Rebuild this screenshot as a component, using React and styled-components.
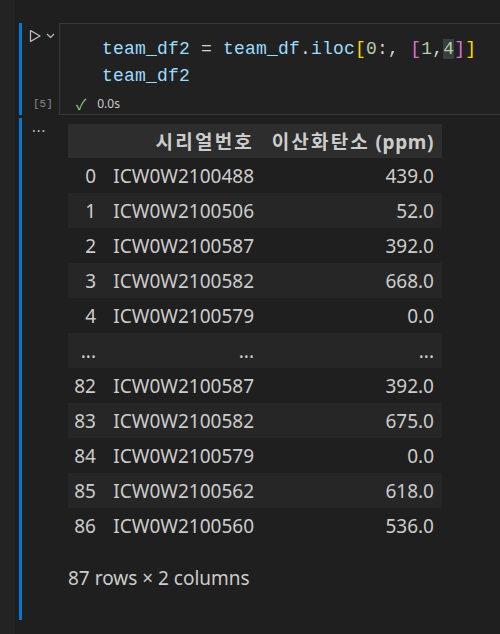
import React from "react";
import styled, { createGlobalStyle } from "styled-components";

const GlobalStyle = createGlobalStyle`
  html, body {
    margin: 0;
    padding: 0;
    background: #1f1f1f;
  }
  body {
    font-family: "Noto Sans", "Noto Sans CJK KR", sans-serif;
  }
`;

const rows = [
  ["0", "ICW0W2100488", "439.0"],
  ["1", "ICW0W2100506", "52.0"],
  ["2", "ICW0W2100587", "392.0"],
  ["3", "ICW0W2100582", "668.0"],
  ["4", "ICW0W2100579", "0.0"],
  ["...", "...", "..."],
  ["82", "ICW0W2100587", "392.0"],
  ["83", "ICW0W2100582", "675.0"],
  ["84", "ICW0W2100579", "0.0"],
  ["85", "ICW0W2100562", "618.0"],
  ["86", "ICW0W2100560", "536.0"],
];

const App = () => {
  return (
    <>
      <GlobalStyle />
      <Page>
        <Gutter />
        <Notebook>
          <Cell>
            <Bar />
            <Side>
              <RunRow>
                <svg width="14" height="14" viewBox="0 0 14 14">
                  <path
                    d="M2.5 1.5 L12 7 L2.5 12.5 Z"
                    fill="none"
                    stroke="#c5c5c5"
                    strokeWidth="1.2"
                    strokeLinejoin="round"
                  />
                </svg>
                <svg width="9" height="6" viewBox="0 0 9 6">
                  <path d="M1 1 L4.5 4.5 L8 1" fill="none" stroke="#c5c5c5" strokeWidth="1.1" />
                </svg>
              </RunRow>
              <ExecCount>[5]</ExecCount>
            </Side>
            <Editor>
              <Code>
                <Line>
                  <V>team_df2</V> = <V>team_df</V>.<V>iloc</V>
                  <Br $c="#ffd700">[</Br>
                  <N>0</N>:, <Br $c="#da70d6">[</Br>
                  <N>1</N>,<Hl>4</Hl>
                  <Br $c="#da70d6">]</Br>
                  <Br $c="#ffd700">]</Br>
                </Line>
                <Line>
                  <V>team_df2</V>
                </Line>
              </Code>
              <Status>
                <Check>✓</Check>
                <span>0.0s</span>
              </Status>
            </Editor>
          </Cell>

          <Cell>
            <Bar $tall />
            <Side>
              <More>...</More>
            </Side>
            <Output>
              <Table>
                <colgroup>
                  <col style={{ width: 36 }} />
                  <col style={{ width: 158 }} />
                  <col style={{ width: 180 }} />
                </colgroup>
                <thead>
                  <tr>
                    <Th></Th>
                    <Th>
                      <Ko>시리얼번호</Ko>
                    </Th>
                    <Th>
                      <Ko>이산화탄소</Ko> (ppm)
                    </Th>
                  </tr>
                </thead>
                <tbody>
                  {rows.map((r, i) => (
                    <Tr key={i} $odd={i % 2 === 1}>
                      <Td>{r[0]}</Td>
                      <Td>{r[1]}</Td>
                      <Td>{r[2]}</Td>
                    </Tr>
                  ))}
                </tbody>
              </Table>
              <Summary>87 rows × 2 columns</Summary>
            </Output>
          </Cell>
        </Notebook>
      </Page>
    </>
  );
};

export default App;

const Page = styled.div`
  display: flex;
  width: 500px;
  height: 634px;
  overflow: hidden;
  background: #1f1f1f;
`;

const Gutter = styled.div`
  width: 15px;
  flex-shrink: 0;
  background: #232323;
`;

const Notebook = styled.div`
  flex: 1;
  padding-top: 23px;
  display: flex;
  flex-direction: column;
  gap: 3px;
`;

const Cell = styled.div`
  display: flex;
  align-items: stretch;
`;

const Bar = styled.div`
  width: 3px;
  margin-left: 4px;
  flex-shrink: 0;
  background: #0078d4;
  height: ${(p) => (p.$tall ? "502px" : "92px")};
`;

const Side = styled.div`
  width: 37px;
  flex-shrink: 0;
  display: flex;
  flex-direction: column;
  justify-content: space-between;
`;

const RunRow = styled.div`
  display: flex;
  align-items: center;
  gap: 4px;
  padding: 6px 0 0 6px;
  height: 14px;
`;

const ExecCount = styled.div`
  font-family: "Liberation Mono", monospace;
  font-size: 11px;
  color: #8b8b8b;
  padding: 0 0 5px 11px;
`;

const More = styled.div`
  font-size: 14px;
  color: #c5c5c5;
  padding: 3px 0 0 10px;
  line-height: 12px;
  letter-spacing: 1px;
`;

const Editor = styled.div`
  flex: 1;
  height: 92px;
  box-sizing: border-box;
  border: 1px solid #383838;
  border-right: none;
  background: #212121;
  display: flex;
  flex-direction: column;
`;

const Code = styled.div`
  padding: 12px 0 0 42px;
  font-family: "Liberation Mono", monospace;
  font-size: 18px;
  letter-spacing: 0.2px;
  line-height: 27px;
  color: #d4d4d4;
  white-space: pre;
`;

const Line = styled.div``;

const V = styled.span`
  color: #9cdcfe;
`;

const N = styled.span`
  color: #b5cea8;
`;

const Hl = styled.span`
  color: #b5cea8;
  background: #3a3d41;
`;

const Br = styled.span`
  color: ${(p) => p.$c};
`;

const Status = styled.div`
  display: flex;
  align-items: center;
  gap: 11px;
  padding: 3px 0 0 16px;
  font-size: 12px;
  color: #cccccc;
`;

const Check = styled.span`
  color: #89d185;
  font-size: 15px;
`;

const Output = styled.div`
  flex: 1;
  padding: 6px 0 0 9px;
`;

const Table = styled.table`
  border-collapse: collapse;
  table-layout: fixed;
  width: 374px;
  font-size: 19px;
  color: #cccccc;
`;

const Th = styled.th`
  background: #2d2d2d;
  height: 34px;
  padding: 0 8px 0 0;
  text-align: right;
  font-weight: 700;
  white-space: nowrap;
  letter-spacing: 0.6px;
`;

const Ko = styled.span`
  letter-spacing: 2.2px;
`;

const Tr = styled.tr`
  background: ${(p) => (p.$odd ? "#262626" : "transparent")};
`;

const Td = styled.td`
  height: 35px;
  padding: 0 8px 0 0;
  text-align: right;
  white-space: nowrap;
`;

const Summary = styled.div`
  margin-top: 22px;
  font-size: 19px;
  color: #cccccc;
`;
